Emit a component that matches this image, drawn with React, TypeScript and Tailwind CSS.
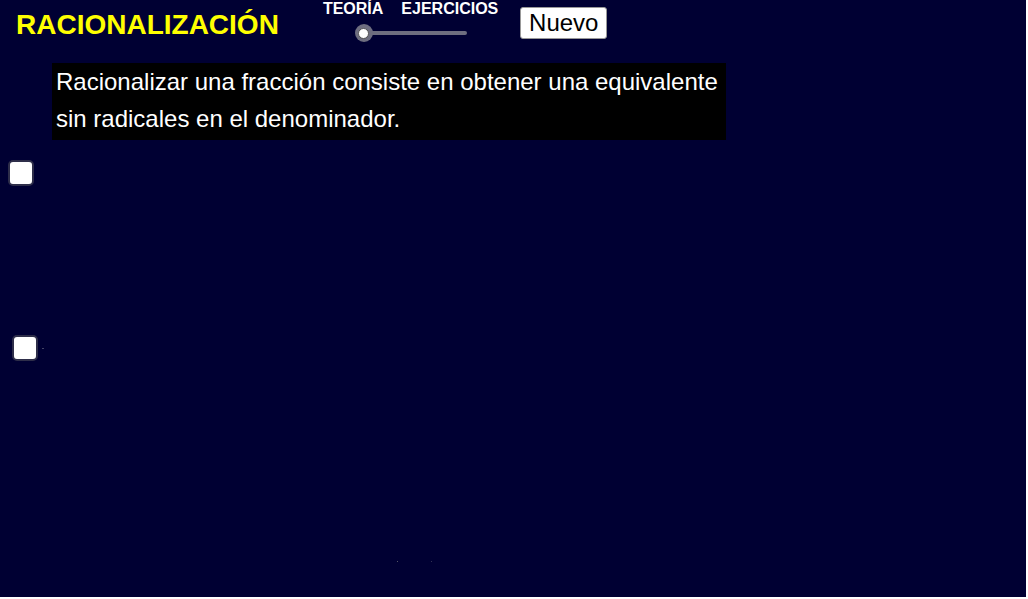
import React from 'react';

const font = { fontFamily: '"Liberation Sans", Arial, sans-serif' };

const Box: React.FC<{ className?: string }> = ({ className = '' }) => (
  <div className={`w-[26px] h-[26px] rounded-[5px] border-2 border-[#2e2e4a] bg-white ${className}`} />
);

export default function App() {
  return (
    <div className="w-full h-[599px] bg-white" style={font}>
      <div className="w-[1026px] h-[597px] bg-[#000033] flex flex-col overflow-hidden">
        <div className="flex items-start h-[63px]">
          <div className="ml-[16px] mt-[9px] text-[28px] leading-[32px] font-bold text-[#ffff00]">RACIONALIZACIÓN</div>
          <div className="ml-[44px] flex flex-col">
            <div className="flex gap-[18px] text-[16px] leading-[18px] font-bold text-white">
              <span>TEORÍA</span>
              <span>EJERCICIOS</span>
            </div>
            <div className="relative mt-[6px] h-[18px] w-[150px]">
              <div className="absolute left-[41px] top-[7px] h-[4px] w-[103px] rounded-full bg-[#6e6e80]" />
              <div className="absolute left-[32px] top-0 w-[18px] h-[18px] rounded-full bg-[#6e6e80] flex items-center justify-center">
                <div className="w-[11px] h-[11px] rounded-full bg-white border border-[#555]" />
              </div>
            </div>
          </div>
          <div className="ml-[22px] mt-[7px] w-[87px] h-[32px] rounded-[3px] bg-white border border-[#999] flex items-center justify-center text-[24px] text-black">
            Nuevo
          </div>
        </div>
        <div className="ml-[52px] w-[674px] h-[77px] bg-black text-white text-[24px] leading-[37px] pl-[4px]">
          Racionalizar una fracción consiste en obtener una equivalente
          <br />
          sin radicales en el denominador.
        </div>
        <Box className="ml-[8px] mt-[20px]" />
        <div className="ml-[12px] mt-[149px] flex items-center">
          <Box />
          <div className="ml-[4px] w-[2px] h-[1px] bg-[#444466]" />
        </div>
        <div className="ml-[397px] mt-[200px] flex">
          <div className="w-[1px] h-[1px] bg-[#555566]" />
          <div className="ml-[33px] w-[1px] h-[1px] bg-[#333355]" />
        </div>
      </div>
    </div>
  );
}
